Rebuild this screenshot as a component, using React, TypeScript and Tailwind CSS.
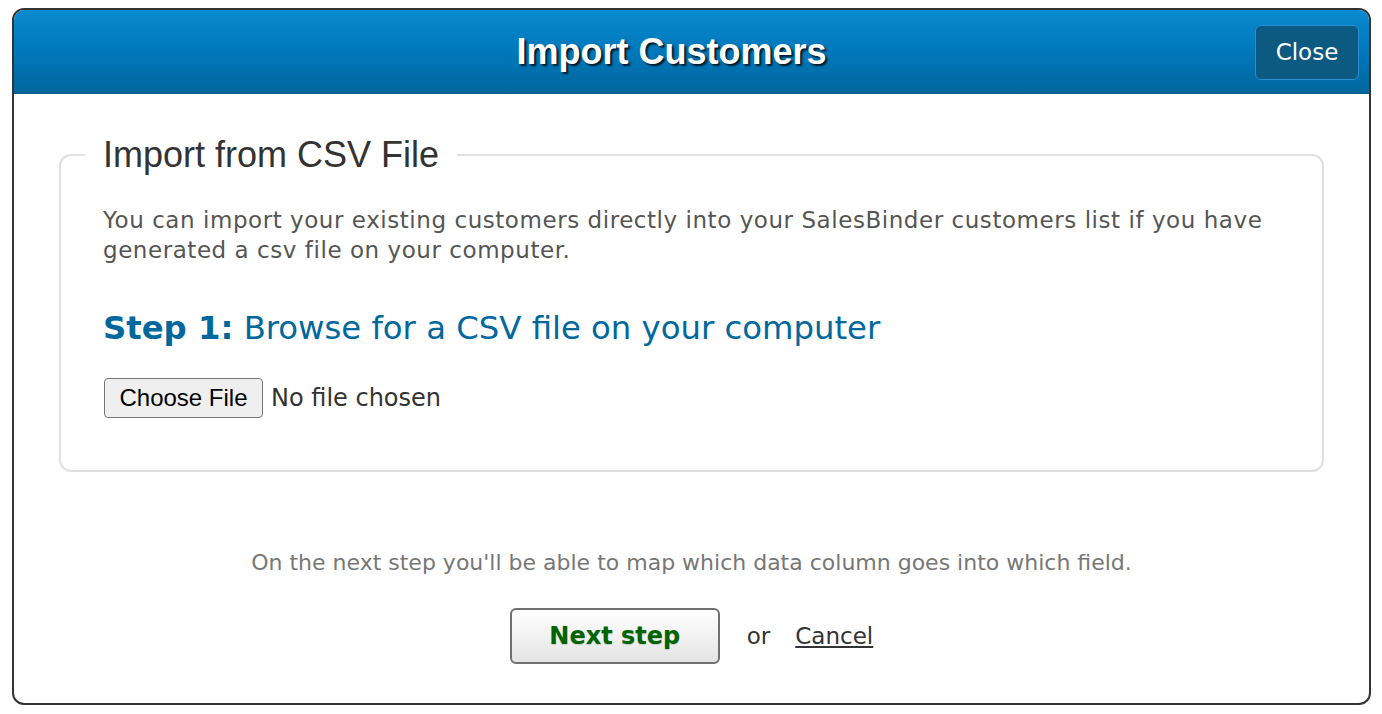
import React from "react";

const verdana = { fontFamily: '"DejaVu Sans", Verdana, sans-serif' };
const arial = { fontFamily: '"Liberation Sans", Arial, sans-serif' };

export default function App() {
  return (
    <div className="bg-white w-[1382px] h-[714px] pt-[8px] pl-[12px] pr-[11px]">
      <div className="border-2 border-[#333] rounded-[12px] overflow-hidden bg-white h-[697px]">
        {/* header bar */}
        <div className="relative h-[84px] flex items-center justify-center bg-gradient-to-b from-[#0a8ad0] via-[#0078bb] to-[#00679c] border-b border-[#005c8c]">
          <h1
            className="mr-[40px] text-white font-bold text-[36px] [text-shadow:2px_2px_2px_rgba(0,0,0,0.8)]"
            style={arial}
          >
            Import Customers
          </h1>
          <button
            className="absolute right-[10px] top-[15px] w-[104px] h-[55px] rounded-[6px] bg-[#0c5a82] border border-[#2a8fd2] text-white text-[23px]"
            style={verdana}
          >
            Close
          </button>
        </div>

        <div className="px-[45px] pt-[41px]">
          <fieldset className="border-2 border-[#e0e0e0] rounded-[12px] pl-[42px] pr-[30px] pt-[30px] pb-[52px]">
            <legend className="px-[18px] -ml-[18px] text-[36px] text-[#333] leading-[40px]" style={arial}>
              Import from CSV File
            </legend>
            <p className="text-[23px] leading-[30px] text-[#555] tracking-[0.55px]" style={verdana}>
              You can import your existing customers directly into your SalesBinder customers list if you have
              <br />
              generated a csv file on your computer.
            </p>
            <h2 className="mt-[45px] text-[32.3px] leading-[36px] text-[#00689c]" style={verdana}>
              <span className="font-bold">Step 1:</span> Browse for a CSV file on your computer
            </h2>
            <div className="mt-[32px] flex items-center">
              <button
                className="ml-px w-[159px] h-[40px] border border-[#767676] rounded-[4px] bg-[#efefef] text-[24px] text-black"
                style={arial}
              >
                Choose File
              </button>
              <span className="ml-[8px] text-[24px] text-[#333]" style={verdana}>
                No file chosen
              </span>
            </div>
          </fieldset>
        </div>

        <p className="mt-[76px] text-center text-[22px] leading-[30px] text-[#777]" style={verdana}>
          On the next step you'll be able to map which data column goes into which field.
        </p>

        <div className="mt-[30px] flex items-center justify-center" style={verdana}>
          <button className="w-[210px] h-[56px] rounded-[6px] border-2 border-[#707070] bg-gradient-to-b from-white to-[#e4e4e4] text-[#006400] font-bold text-[24px] [text-shadow:0_1px_1px_rgba(0,0,0,0.15)]">
            Next step
          </button>
          <span className="ml-[27px] text-[23px] text-[#333]">or</span>
          <a href="#" className="ml-[25px] text-[23px] text-[#333] underline">
            Cancel
          </a>
        </div>
      </div>
    </div>
  );
}
